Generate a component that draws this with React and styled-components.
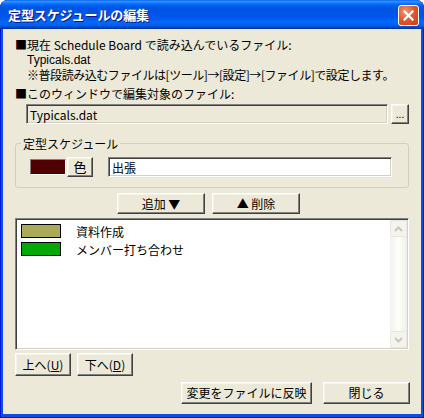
import React from 'react'
import styled, { createGlobalStyle } from 'styled-components'

const Global = createGlobalStyle`
  html, body {
    margin: 0;
    padding: 0;
    background: #ffffff;
  }
  body {
    font-family: "MS UI Gothic", "Noto Sans CJK JP", "Liberation Sans", sans-serif;
    font-size: 12px;
    color: #000;
  }
`

const Window = styled.div`
  width: 424px;
  height: 418px;
  box-sizing: border-box;
  display: flex;
  flex-direction: column;
  border-radius: 8px 8px 0 0;
  background: #0a4fe8;
  box-shadow: inset 1px 0 #0019cf, inset -1px 0 #001ea0, inset 0 -1px #001a8c;
  overflow: hidden;
`

const TitleBar = styled.div`
  height: 29px;
  flex: none;
  display: flex;
  align-items: center;
  padding: 0 5px 0 8px;
  background: linear-gradient(
    to bottom,
    #0058ee 0%,
    #3a93ff 4%,
    #288eff 7%,
    #127dff 10%,
    #036ffc 14%,
    #0262ee 18%,
    #0057e5 24%,
    #0054e3 30%,
    #0055eb 56%,
    #005bf5 66%,
    #026afe 76%,
    #0062ef 86%,
    #0052d6 92%,
    #0040ab 96%,
    #003092 100%
  );
`

const Title = styled.div`
  flex: 1;
  color: #fff;
  font-family: "Noto Sans CJK JP", sans-serif;
  font-weight: 700;
  font-size: 13px;
  letter-spacing: -0.1px;
  text-shadow: 1px 1px #0a1883;
`

const CloseButton = styled.div`
  width: 21px;
  height: 21px;
  box-sizing: border-box;
  border: 1px solid #fff;
  border-radius: 3px;
  background: radial-gradient(circle at 35% 30%, #f29a78 0%, #e15a31 45%, #c93c13 100%);
  display: flex;
  align-items: center;
  justify-content: center;
  margin-top: 1px;
`

const Body = styled.div`
  flex: 1;
  margin: 0 3px 4px 3px;
  background: #ece9d8;
  padding: 9px 12px 0 12px;
  display: flex;
  flex-direction: column;
`

const Line = styled.div`
  line-height: 13px;
  height: 13px;
  white-space: nowrap;
  padding-left: ${p => (p.indent ? '12px' : '0')};
  margin-top: ${p => p.top || 0}px;
  letter-spacing: ${p => (p.tight ? '-0.45px' : '0')};
  font-family: ${p => (p.latin ? '"Liberation Sans", sans-serif' : 'inherit')};
`

const Sunken = styled.div`
  box-sizing: border-box;
  border-style: solid;
  border-width: 1px;
  border-color: #808080 #ffffff #ffffff #808080;
  box-shadow: inset 1px 1px #404040, inset -1px -1px #d4d0c8;
  background: ${p => p.bg || '#fff'};
`

const Field = styled(Sunken)`
  height: 20px;
  width: ${p => p.w}px;
  padding: 3px 3px 0 3px;
  line-height: 13px;
  white-space: nowrap;
  margin-left: ${p => p.left || 0}px;
`

const Button = styled.div`
  box-sizing: border-box;
  width: ${p => p.w}px;
  height: ${p => p.h || 21}px;
  background: #ece9d8;
  border-style: solid;
  border-width: 1px;
  border-color: #ffffff #404040 #404040 #ffffff;
  box-shadow: inset -1px -1px #808080, inset 1px 1px #f5f4ec;
  display: flex;
  align-items: center;
  justify-content: center;
  line-height: 14px;
  white-space: nowrap;
  flex: none;
  font-size: ${p => p.fs || 12}px;
`

const Row = styled.div`
  display: flex;
  align-items: flex-start;
  gap: ${p => p.gap || 0}px;
  margin-top: ${p => p.top || 0}px;
  margin-left: ${p => p.left || 0}px;
  justify-content: ${p => p.justify || 'flex-start'};
`

const Group = styled.div`
  margin-top: 19px;
  padding: 13px 0 0 14px;
  height: 45px;
  width: 394px;
  box-sizing: border-box;
  border: 1px solid #d0d0bf;
  border-radius: 3px;
  position: relative;
`

const Legend = styled.span`
  position: absolute;
  top: -7px;
  left: 5px;
  padding: 0 2px;
  line-height: 13px;
  background: #ece9d8;
`

const Swatch = styled.div`
  width: ${p => p.w}px;
  height: ${p => p.h}px;
  box-sizing: border-box;
  background: ${p => p.color};
  border: 1px solid #000;
  flex: none;
`

const ColorSwatch = styled(Swatch)`
  border-color: #808080 #ffffff #ffffff #808080;
  margin-top: 2px;
`

const ListBox = styled(Sunken)`
  width: 394px;
  height: 132px;
  margin-top: 4px;
  display: flex;
  padding: 0;
`

const Items = styled.div`
  flex: 1;
  padding: 3px 0 0 5px;
`

const Item = styled.div`
  display: flex;
  align-items: center;
  height: 18px;
  gap: 15px;
`

const ScrollBar = styled.div`
  width: 17px;
  margin: 1px 1px 1px 0;
  display: flex;
  flex-direction: column;
  justify-content: space-between;
  background: linear-gradient(to right, #f3f1ec, #fefefb 50%, #f0efe8);
`

const Arrow = styled.div`
  width: 17px;
  height: 17px;
  box-sizing: border-box;
  border: 1px solid #e8e8df;
  border-radius: 2px;
  background: #f4f3ee;
  display: flex;
  align-items: center;
  justify-content: center;
`

const U = styled.span`
  text-decoration: underline;
`

const Chevron = ({ up }) => (
  <svg width="9" height="6" viewBox="0 0 9 6">
    <path
      d={up ? 'M1 5 L4.5 1.5 L8 5' : 'M1 1 L4.5 4.5 L8 1'}
      fill="none"
      stroke="#c9c7ba"
      strokeWidth="2"
    />
  </svg>
)

const items = [
  { id: 1, color: '#aaaa5a', label: '資料作成' },
  { id: 2, color: '#00a800', label: 'メンバー打ち合わせ' },
]

export default function App() {
  return (
    <>
      <Global />
      <Window>
        <TitleBar>
          <Title>定型スケジュールの編集</Title>
          <CloseButton>
            <svg width="11" height="11" viewBox="0 0 11 11">
              <path d="M1.5 1.5 L9.5 9.5 M9.5 1.5 L1.5 9.5" stroke="#fff" strokeWidth="2.2" strokeLinecap="square" />
            </svg>
          </CloseButton>
        </TitleBar>
        <Body>
          <Line>■現在 Schedule Board で読み込んでいるファイル:</Line>
          <Line indent latin top={3}>Typicals.dat</Line>
          <Line indent tight top={1}>※普段読み込むファイルは[ツール]→[設定]→[ファイル]で設定します。</Line>
          <Line top={6}>■このウィンドウで編集対象のファイル:</Line>
          <Row top={4} left={11} gap={3}>
            <Field w={362} bg="#ece9d8">Typicals.dat</Field>
            <Button w={18} h={20} fs={10}>...</Button>
          </Row>
          <Group>
            <Legend>定型スケジュール</Legend>
            <Row gap={1}>
              <ColorSwatch w={36} h={16} color="#4f0000" />
              <Button w={26} h={20} fs={13}>色</Button>
              <Field w={284} left={14}>出張</Field>
            </Row>
          </Group>
          <Row top={5} gap={7} left={102}>
            <Button w={88}>追加 ▼</Button>
            <Button w={88}>▲ 削除</Button>
          </Row>
          <ListBox>
            <Items>
              {items.map(item => (
                <Item key={item.id}>
                  <Swatch w={40} h={14} color={item.color} />
                  <span>{item.label}</span>
                </Item>
              ))}
            </Items>
            <ScrollBar>
              <Arrow><Chevron up /></Arrow>
              <Arrow><Chevron /></Arrow>
            </ScrollBar>
          </ListBox>
          <Row top={3} gap={6}>
            <Button w={56} h={23}>上へ(<U>U</U>)</Button>
            <Button w={56} h={23}>下へ(<U>D</U>)</Button>
          </Row>
          <Row top={6} gap={11} justify="flex-end" style={{ marginRight: -1 }}>
            <Button w={131} h={22}>変更をファイルに反映</Button>
            <Button w={87} h={22}>閉じる</Button>
          </Row>
        </Body>
      </Window>
    </>
  )
}
